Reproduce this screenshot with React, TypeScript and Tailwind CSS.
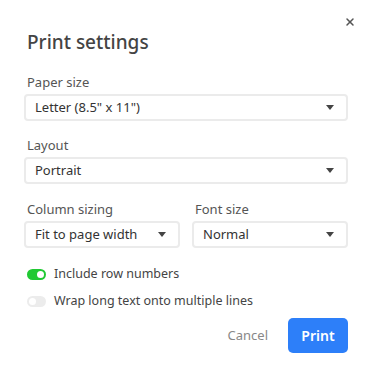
import { X } from "lucide-react"

function Caret() {
  return (
    <svg width="8" height="5" viewBox="0 0 8 5" aria-hidden="true" className="shrink-0">
      <path d="M0 0 L8 0 L4 5 Z" fill="#444" />
    </svg>
  )
}

function Select({ value }: { value: string }) {
  return (
    <div className="flex h-[27px] items-center justify-between rounded-[4px] border-2 border-[#ebebeb] pl-[9px] pr-[12px] text-[13px] text-[#333]">
      <span>{value}</span>
      <Caret />
    </div>
  )
}

function Field({ label, value }: { label: string; value: string }) {
  return (
    <div className="flex flex-col">
      <div className="mb-1 h-4 pl-[3px] text-[13px] leading-4 text-[#555]">{label}</div>
      <Select value={value} />
    </div>
  )
}

function Toggle({ on, label }: { on: boolean; label: string }) {
  return (
    <div className="flex h-[18px] items-center pl-[3px]">
      <div
        className={
          on
            ? "flex h-[11px] w-[19px] items-center justify-end rounded-full bg-[#20c933] px-[2px]"
            : "flex h-[11px] w-[19px] items-center justify-start rounded-full bg-[#ececec] px-[2px]"
        }
      >
        <div className="h-[7px] w-[7px] rounded-full bg-white" />
      </div>
      <span className="ml-2 text-[12.5px] text-[#444]">{label}</span>
    </div>
  )
}

export default function App() {
  return (
    <div
      className="relative h-[377px] w-[374px] bg-white pl-6 pr-[26px] pt-[30px]"
      style={{ fontFamily: '"Noto Sans", "Open Sans", sans-serif' }}
    >
      <button className="absolute right-[18px] top-[16px] text-[#555]" aria-label="Close">
        <X size={12} strokeWidth={3} />
      </button>

      <h1 className="h-6 pl-[3px] text-[19px] font-medium leading-6 text-[#444]">Print settings</h1>

      <div className="mt-5 flex flex-col gap-4">
        <Field label="Paper size" value={'Letter (8.5" x 11")'} />
        <Field label="Layout" value="Portrait" />
      </div>
      <div className="mt-[17px] grid grid-cols-2 gap-3">
        <Field label="Column sizing" value="Fit to page width" />
        <Field label="Font size" value="Normal" />
      </div>

      <div className="mt-[17px] flex flex-col gap-[9px]">
        <Toggle on label="Include row numbers" />
        <Toggle on={false} label="Wrap long text onto multiple lines" />
      </div>

      <div className="mt-[8px] flex items-center justify-end gap-4">
        <button className="px-1 text-[13px] text-[#888]">Cancel</button>
        <button className="h-[35px] w-[60px] rounded-[5px] bg-[#2d7ff9] text-[14px] font-semibold text-white">
          Print
        </button>
      </div>
    </div>
  )
}
